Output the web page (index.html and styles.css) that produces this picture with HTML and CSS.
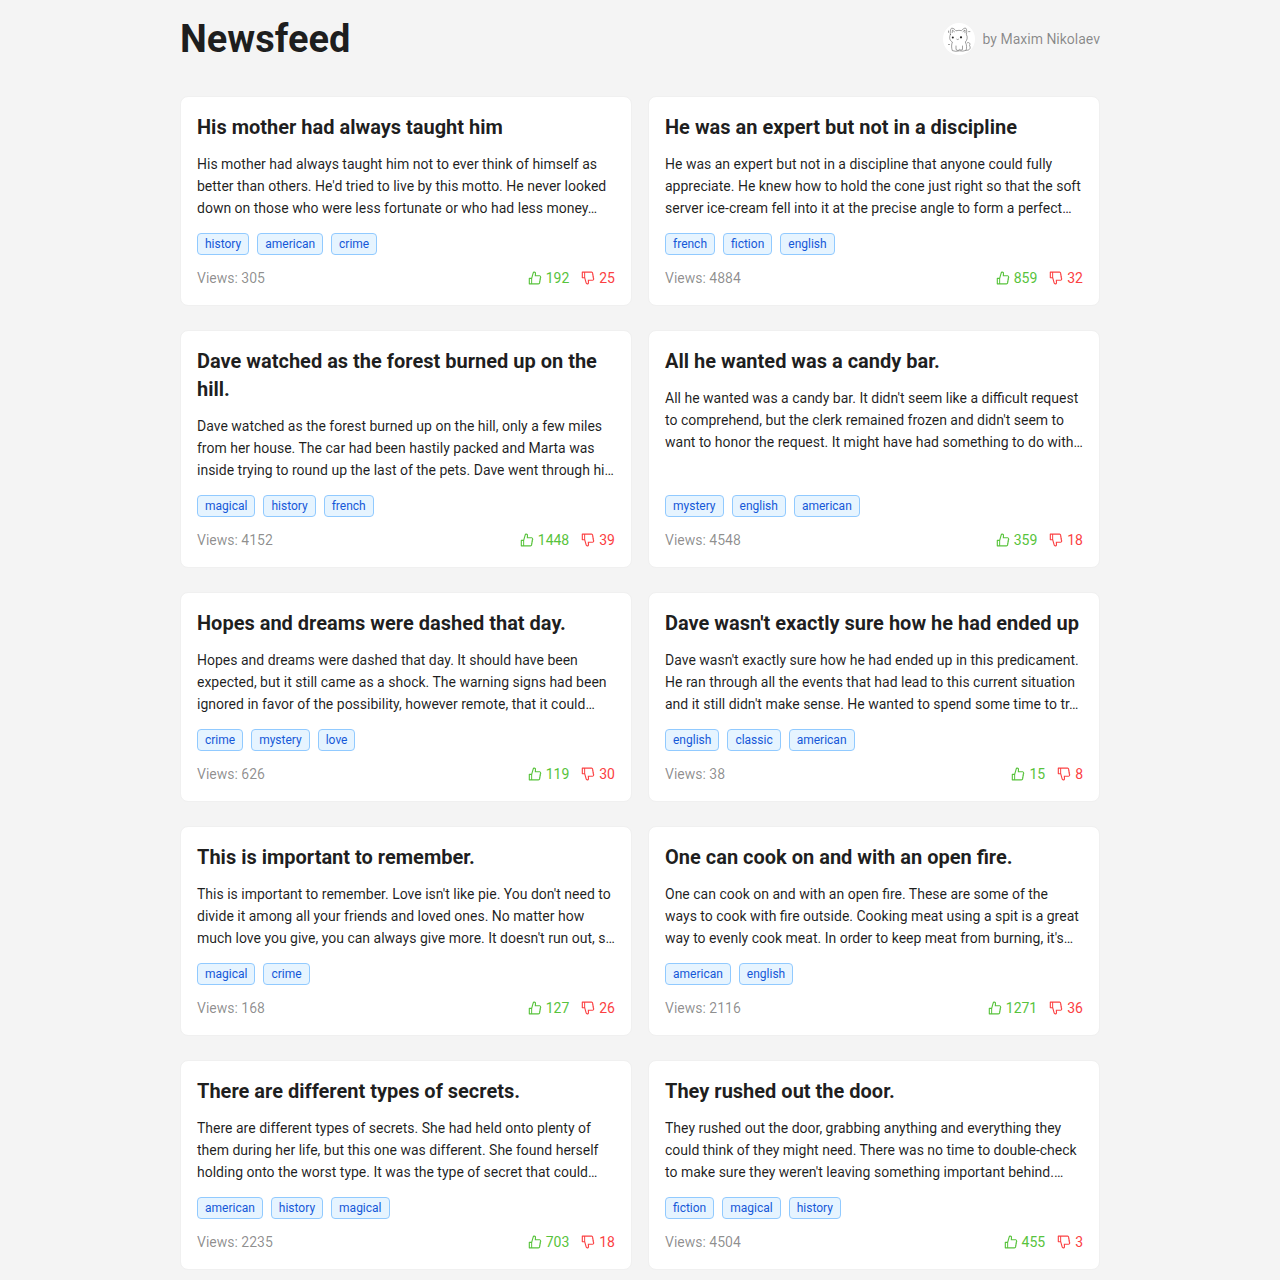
FILE: index.html
```html
<!DOCTYPE html>
<html lang="en">
<head>
<meta charset="utf-8">
<title>Newsfeed</title>
<link rel="stylesheet" href="styles.css">
</head>
<body>
<main class="page">
<header class="header">
<h1>Newsfeed</h1>
<div class="author">
<svg class="avatar" viewBox="0 0 32 32" aria-hidden="true">
<circle cx="16" cy="16" r="16" fill="#fff"/>
<g fill="none" stroke="#555" stroke-width=".8" stroke-opacity=".7" stroke-linecap="round" stroke-linejoin="round">
<path d="M7.400 11.500C7 8 7.600 5.400 8.800 5.200 10.500 5 12 6.800 13 7.800Q16 7 18.500 7.600C20 6 21.800 4.600 22.800 5.200 24 6.500 23.800 9 23.400 11.500 25 14.500 24 17.500 22.300 19 24 22 23.800 25.500 23 27.400Q20 28.600 16.500 27.800Q12.500 28.900 9.300 27.600C8.300 24.500 8.400 21.500 9.400 19 6.500 17.500 6 14.500 7.400 11.500Z"/>
<path d="M9.200 9.600 9.500 7.200 11.500 8.800M20 8.600 22 7 22 9.800M13 23v3.500q1.500 1.500 3 .8M16.500 26.500q1.500 1.500 3 0V23M23.500 27.300c3.500.2 4.500-2.500 3-4.600 1.200-2.200-.4-4-2.200-2.900M13.800 16.300q1 .8 1.800 0M5.500 8v1.400M25.600 8.600h1.300M5.400 21.500h1.200"/>
</g>
<circle cx="9.800" cy="14.500" r="1" fill="#222"/><circle cx="18" cy="14.300" r="1.100" fill="#222"/>
</svg>
<span>by Maxim Nikolaev</span>
</div>
</header>
<section class="feed" id="feed"></section>
</main>
<svg width="0" height="0" class="sprite" aria-hidden="true">
<symbol id="like" viewBox="64 64 896 896"><path d="M885.9 533.7c16.8-22.2 26.1-49.4 26.1-77.7 0-44.9-25.1-87.4-65.5-111.1a67.67 67.67 0 00-34.3-9.3H572.4l6-122.9c1.4-29.7-9.1-57.9-29.5-79.4A106.62 106.62 0 00471 99.9c-52 0-98 35-111.8 85.1l-85.9 311H144c-17.7 0-32 14.3-32 32v364c0 17.7 14.3 32 32 32h601.3c9.2 0 18.2-1.8 26.5-5.4 47.6-20.3 78.3-66.8 78.3-118.4 0-12.6-1.8-25-5.4-37 16.8-22.2 26.1-49.4 26.1-77.7 0-12.6-1.8-25-5.4-37 16.8-22.2 26.1-49.4 26.1-77.7-.2-12.6-2-25.1-5.6-37.1zM184 852V568h81v284h-81zm636.4-353l-21.9 19 13.9 25.4a56.2 56.2 0 016.9 27.3c0 16.5-7.2 32.2-19.6 43l-21.9 19 13.9 25.4a56.2 56.2 0 016.9 27.3c0 16.5-7.2 32.2-19.6 43l-21.9 19 13.9 25.4a56.2 56.2 0 016.9 27.3c0 22.4-13.2 42.6-33.6 51.8H329V564.8l99.5-360.5a44.1 44.1 0 0142.2-32.3c7.6 0 15.1 2.2 21.1 6.7 9.9 7.4 15.2 18.6 14.6 30.5l-9.6 198.4h314.4C829 418.5 840 436.9 840 456c0 16.5-7.2 32.1-19.6 43z"/></symbol>
<symbol id="dislike" viewBox="64 64 896 896"><path d="M885.9 490.3c3.6-12 5.4-24.4 5.4-37 0-28.3-9.3-55.5-26.1-77.7 3.6-12 5.4-24.4 5.4-37 0-28.3-9.3-55.5-26.1-77.7 3.6-12 5.4-24.4 5.4-37 0-51.6-30.7-98.1-78.3-118.4a66.1 66.1 0 00-26.5-5.4H144c-17.7 0-32 14.3-32 32v364c0 17.7 14.3 32 32 32h129.3l85.8 310.8C372.9 889 418.9 924 470.9 924c29.7 0 57.4-11.8 77.9-33.4 20.5-21.5 31-49.7 29.5-79.4l-6-122.9h239.9c12.1 0 23.9-3.2 34.3-9.3 40.4-23.5 65.5-66.1 65.5-111 0-28.3-9.3-55.5-26.1-77.7zM184 456V172h81v284h-81zm627.2 160.4H496.8l9.6 198.4c.6 11.9-4.7 23.1-14.6 30.5-6.1 4.5-13.6 6.8-21.1 6.7a44.28 44.28 0 01-42.2-32.3L329 459.2V172h415.4a56.85 56.85 0 0133.6 51.8c0 9.7-2.3 18.9-6.9 27.3l-13.9 25.4 21.9 19a56.76 56.76 0 0119.6 43c0 9.7-2.3 18.9-6.9 27.3l-13.9 25.4 21.9 19a56.76 56.76 0 0119.6 43c0 9.7-2.3 18.9-6.9 27.3l-14 25.5 21.9 19a56.76 56.76 0 0119.6 43c0 19.1-11 37.5-28.8 48.4z"/></symbol>
</svg>
<script src="feed.js"></script>
</body>
</html>
```
FILE: styles.css
```css
* { box-sizing: border-box; }
body {
  margin: 0;
  height: 1280px;
  overflow: hidden;
  background: #f4f4f4;
  color: rgba(0, 0, 0, .88);
  font: 14px/22px Roboto, sans-serif;
}
.page { width: 920px; margin: 0 auto; padding-top: 16px; }
.header {
  display: flex;
  align-items: center;
  justify-content: space-between;
  margin-bottom: 34px;
}
h1 { margin: 0; font-size: 38px; line-height: 46px; font-weight: 700; }
.author { display: flex; align-items: center; gap: 8px; color: rgba(0, 0, 0, .45); }
.avatar { width: 32px; height: 32px; }
.feed { display: grid; grid-template-columns: 1fr 1fr; gap: 24px 16px; }
.card {
  display: flex;
  flex-direction: column;
  min-width: 0;
  padding: 16px;
  background: #fff;
  border: 1px solid #f0f0f0;
  border-radius: 8px;
}
.card h2 { margin: 0 0 12px; font-size: 20px; line-height: 28px; font-weight: 700; }
.excerpt {
  margin: 0 0 14px;
  white-space: pre-line;
}
.tags { display: flex; gap: 8px; margin-top: auto; }
.tag {
  padding: 0 7px;
  border: 1px solid #91caff;
  border-radius: 4px;
  background: #e6f4ff;
  color: #1558d8;
  font-size: 12px;
  line-height: 20px;
}
.stats { display: flex; justify-content: space-between; margin-top: 12px; }
.views { color: rgba(0, 0, 0, .45); }
.votes { display: flex; gap: 12px; }
.vote { display: flex; align-items: center; gap: 4px; }
.vote svg { width: 14px; height: 14px; fill: currentColor; }
.up { color: #58c33c; }
.down { color: #fb4143; }
.sprite { display: block; }
```
FILE: feed.js
```js
const posts = [
  ["His mother had always taught him", "His mother had always taught him not to ever think of himself as\nbetter than others. He'd tried to live by this motto. He never looked\ndown on those who were less fortunate or who had less money…", "history american crime", 305, 192, 25],
  ["He was an expert but not in a discipline", "He was an expert but not in a discipline that anyone could fully\nappreciate. He knew how to hold the cone just right so that the soft\nserver ice-cream fell into it at the precise angle to form a perfect…", "french fiction english", 4884, 859, 32],
  ["Dave watched as the forest burned up on the hill.", "Dave watched as the forest burned up on the hill, only a few miles\nfrom her house. The car had been hastily packed and Marta was\ninside trying to round up the last of the pets. Dave went through hi…", "magical history french", 4152, 1448, 39],
  ["All he wanted was a candy bar.", "All he wanted was a candy bar. It didn't seem like a difficult request\nto comprehend, but the clerk remained frozen and didn't seem to\nwant to honor the request. It might have had something to do with…", "mystery english american", 4548, 359, 18],
  ["Hopes and dreams were dashed that day.", "Hopes and dreams were dashed that day. It should have been\nexpected, but it still came as a shock. The warning signs had been\nignored in favor of the possibility, however remote, that it could…", "crime mystery love", 626, 119, 30],
  ["Dave wasn't exactly sure how he had ended up", "Dave wasn't exactly sure how he had ended up in this predicament.\nHe ran through all the events that had lead to this current situation\nand it still didn't make sense. He wanted to spend some time to tr…", "english classic american", 38, 15, 8],
  ["This is important to remember.", "This is important to remember. Love isn't like pie. You don't need to\ndivide it among all your friends and loved ones. No matter how\nmuch love you give, you can always give more. It doesn't run out, s…", "magical crime", 168, 127, 26],
  ["One can cook on and with an open fire.", "One can cook on and with an open fire. These are some of the\nways to cook with fire outside. Cooking meat using a spit is a great\nway to evenly cook meat. In order to keep meat from burning, it's…", "american english", 2116, 1271, 36],
  ["There are different types of secrets.", "There are different types of secrets. She had held onto plenty of\nthem during her life, but this one was different. She found herself\nholding onto the worst type. It was the type of secret that could…", "american history magical", 2235, 703, 18],
  ["They rushed out the door.", "They rushed out the door, grabbing anything and everything they\ncould think of they might need. There was no time to double-check\nto make sure they weren't leaving something important behind.…", "fiction magical history", 4504, 455, 3]
];

document.getElementById("feed").innerHTML = posts.map(([title, text, tags, views, likes, dislikes]) => `
<article class="card">
  <h2>${title}</h2>
  <p class="excerpt">${text}</p>
  <div class="tags">${tags.split(" ").map(t => `<span class="tag">${t}</span>`).join("")}</div>
  <div class="stats">
    <span class="views">Views: ${views}</span>
    <div class="votes">
      <span class="vote up"><svg><use href="#like"/></svg>${likes}</span>
      <span class="vote down"><svg><use href="#dislike"/></svg>${dislikes}</span>
    </div>
  </div>
</article>`).join("");
```
